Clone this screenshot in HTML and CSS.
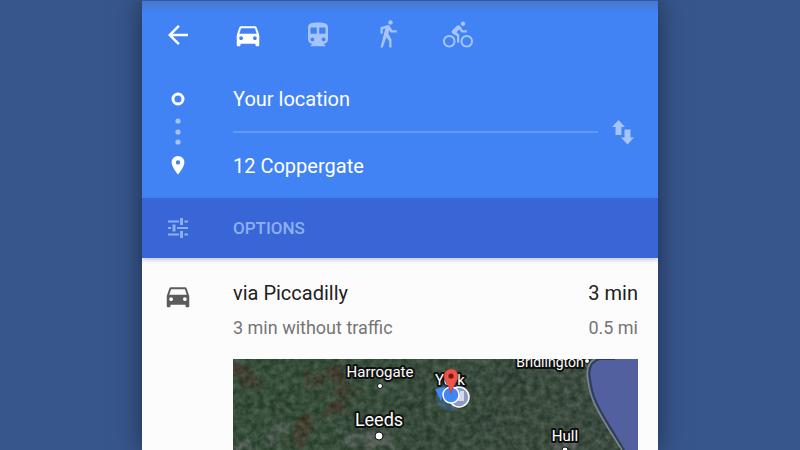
FILE: index.html
```html
<!DOCTYPE html>
<html lang="en">
<head>
<meta charset="utf-8">
<meta name="viewport" content="width=device-width, initial-scale=1">
<title>Directions</title>
<link rel="stylesheet" href="styles.css">
</head>
<body>
<main class="panel">
  <header class="header">
    <nav class="modes" aria-label="Travel mode">
      <button class="icon-button" type="button" aria-label="Back">
        <svg class="icon" viewBox="0 0 24 24"><path d="M20 11H7.830l5.590-5.590L12 4l-8 8 8 8 1.410-1.410L7.830 13H20v-2z"/></svg>
      </button>
      <button class="icon-button" type="button" aria-label="Driving" aria-pressed="true">
        <svg class="icon" viewBox="0 0 24 24"><path d="M18.920 6.010C18.720 5.420 18.160 5 17.500 5h-11c-.66 0-1.210.42-1.420 1.010L3 12v8c0 .55.45 1 1 1h1c.55 0 1-.45 1-1v-1h12v1c0 .55.45 1 1 1h1c.55 0 1-.45 1-1v-8l-2.080-5.990zM6.500 16c-.83 0-1.500-.67-1.500-1.500S5.670 13 6.500 13s1.500.67 1.500 1.500S7.330 16 6.500 16zm11 0c-.83 0-1.500-.67-1.500-1.500s.67-1.500 1.500-1.500 1.500.67 1.500 1.500-.67 1.500-1.500 1.500zM5 11l1.500-4.500h11L19 11H5z"/></svg>
      </button>
      <button class="icon-button muted" type="button" aria-label="Transit">
        <svg class="icon" viewBox="0 0 24 24"><path d="M12 2c-4.420 0-8 .5-8 4v9.500C4 17.430 5.570 19 7.500 19L6 20.500v.5h12v-.5L16.500 19c1.930 0 3.500-1.570 3.500-3.500V6c0-3.500-3.580-4-8-4zM7.500 17c-.83 0-1.500-.67-1.500-1.500S6.670 14 7.500 14s1.500.67 1.500 1.500S8.330 17 7.500 17zm3.500-6H6V6h5v5zm5.500 6c-.83 0-1.500-.67-1.500-1.500s.67-1.500 1.500-1.500 1.500.67 1.500 1.500-.67 1.500-1.500 1.500zm1.500-6h-5V6h5v5z"/></svg>
      </button>
      <button class="icon-button muted" type="button" aria-label="Walking">
        <svg class="icon" viewBox="0 0 24 24"><path d="M14 3.800c.99 0 1.800-.81 1.800-1.800 0-1-.81-1.800-1.800-1.800-1 0-1.800.81-1.800 1.800C12.200 3 13 3.800 14 3.800zm.12 6.200H19V8.200h-3.620l-2-3.330c-.3-.5-.84-.83-1.460-.83-.17 0-.34.03-.49.07L6 5.800V11h1.800V7.330l2.110-.66L6 22h1.800l2.870-8.110L13 17v5h1.800v-6.410l-2.490-4.540.73-2.870L14.120 10z"/></svg>
      </button>
      <button class="icon-button muted" type="button" aria-label="Cycling">
        <svg class="icon" viewBox="0 0 24 24"><path d="M16 4.800c.99 0 1.800-.81 1.800-1.800s-.81-1.800-1.800-1.800c-1 0-1.800.81-1.800 1.800S15 4.800 16 4.800zm3 7.200c-2.760 0-5 2.240-5 5s2.240 5 5 5 5-2.240 5-5-2.240-5-5-5zm0 8.500c-1.930 0-3.500-1.570-3.500-3.500s1.570-3.500 3.500-3.500 3.500 1.570 3.500 3.500-1.570 3.500-3.500 3.500zm-4.200-10.500H19V8.200h-3.200l-1.930-3.270c-.3-.5-.84-.83-1.460-.83-.47 0-.89.19-1.200.5L7.500 8.290C7.190 8.600 7 9.030 7 9.500c0 .63.33 1.160.85 1.470L11.200 13v5H13v-6.480l-2.250-1.670 2.320-2.330L14.800 10zM5 12c-2.760 0-5 2.240-5 5s2.240 5 5 5 5-2.240 5-5-2.240-5-5-5zm0 8.500c-1.930 0-3.500-1.570-3.500-3.500s1.570-3.500 3.500-3.500 3.500 1.570 3.500 3.500-1.570 3.500-3.500 3.500z"/></svg>
      </button>
    </nav>

    <form class="route">
      <svg class="stops" viewBox="0 0 30 98" aria-hidden="true">
        <circle cx="15" cy="16" r="5" fill="none" stroke="#fff" stroke-width="3"/>
        <g fill="#a5c4fa"><circle cx="15" cy="38" r="2.600"/><circle cx="15" cy="49" r="2.600"/><circle cx="15" cy="59" r="2.600"/></g>
        <path fill="#fff" fill-rule="evenodd" d="M15 73a6.400 6.400 0 0 0-6.400 6.400C8.600 84 15 91.500 15 91.500S21.400 84 21.400 79.400A6.400 6.400 0 0 0 15 73zm0 4.200a2.200 2.200 0 1 1 0 4.400 2.200 2.200 0 0 1 0-4.400z"/>
      </svg>
      <div class="fields">
        <input class="field" type="text" aria-label="Starting point" value="Your location">
        <input class="field" type="text" aria-label="Destination" value="12 Coppergate">
      </div>
      <button class="icon-button muted" type="button" aria-label="Swap start and destination">
        <svg class="icon" viewBox="0 0 30 30"><path d="M10.500 3l6.500 7h-3.500v8h-6v-8H4zM16.500 12.500h6v8H26l-6.500 7-6.500-7h3.500z"/></svg>
      </button>
    </form>
  </header>

  <button class="options" type="button">
    <svg class="icon" viewBox="0 0 30 30" aria-hidden="true"><path d="M5 7.500h11v2H5zM17 5h3v7h-3zM21.500 7.500H25v2h-3.500zM5 14h3v2H5zM9.500 11.500h3v7h-3zM14 14h11v2H14zM5 20.500h11v2H5zM17 18h3v7h-3zM21.500 20.500H25v2h-3.500z"/></svg>
    <span>OPTIONS</span>
  </button>

  <article class="result">
    <svg class="icon result-icon" viewBox="0 0 24 24" aria-hidden="true"><path d="M18.920 6.010C18.720 5.420 18.160 5 17.500 5h-11c-.66 0-1.210.42-1.420 1.010L3 12v8c0 .55.45 1 1 1h1c.55 0 1-.45 1-1v-1h12v1c0 .55.45 1 1 1h1c.55 0 1-.45 1-1v-8l-2.080-5.990zM6.500 16c-.83 0-1.500-.67-1.500-1.500S5.670 13 6.500 13s1.500.67 1.500 1.500S7.330 16 6.500 16zm11 0c-.83 0-1.500-.67-1.500-1.500s.67-1.500 1.500-1.500 1.500.67 1.500 1.500-.67 1.500-1.500 1.500zM5 11l1.500-4.500h11L19 11H5z"/></svg>
    <div class="details">
      <div class="line primary"><h1 class="name">via Piccadilly</h1><span>3 min</span></div>
      <div class="line secondary"><span>3 min without traffic</span><span>0.5 mi</span></div>
      <svg class="map" viewBox="0 0 405 91" role="img" aria-label="Satellite map around York">
        <defs>
          <linearGradient id="land"><stop offset="0" stop-color="#36533c"/><stop offset=".45" stop-color="#3a4f3e"/><stop offset="1" stop-color="#414e45"/></linearGradient>
          <filter id="grain" x="0" y="0" width="100%" height="100%" color-interpolation-filters="sRGB">
            <feTurbulence type="fractalNoise" baseFrequency=".16" numOctaves="5" seed="8"/>
            <feColorMatrix values=".8 0 0 0 -.19  .8 0 0 0 -.13  .8 0 0 0 -.19  0 0 0 0 .3"/>
          </filter>
          <filter id="patches" x="-10%" y="-10%" width="120%" height="120%" color-interpolation-filters="sRGB">
            <feTurbulence type="fractalNoise" baseFrequency=".13" numOctaves="4" seed="3" result="n"/>
            <feDisplacementMap in="SourceGraphic" in2="n" scale="24" xChannelSelector="R" yChannelSelector="G"/>
            <feGaussianBlur stdDeviation=".9"/>
          </filter>
        </defs>
        <rect width="405" height="91" fill="url(#land)"/>
        <g filter="url(#patches)">
          <g fill="#4b3a30" opacity=".85">
            <ellipse cx="8" cy="12" rx="8" ry="10"/><ellipse cx="18" cy="23" rx="6" ry="6"/>
            <ellipse cx="80" cy="20" rx="9" ry="7"/><ellipse cx="103" cy="16" rx="9" ry="10"/>
            <ellipse cx="112" cy="31" rx="9" ry="6"/><ellipse cx="104" cy="49" rx="10" ry="7"/>
            <ellipse cx="72" cy="65" rx="8" ry="9"/><ellipse cx="64" cy="79" rx="9" ry="8"/>
          </g>
          <g fill="#77747a" opacity=".6">
            <ellipse cx="48" cy="69" rx="8" ry="4"/><ellipse cx="35" cy="80" rx="9" ry="4"/>
            <ellipse cx="92" cy="59" rx="6" ry="4"/><ellipse cx="118" cy="80" rx="11" ry="6"/>
            <ellipse cx="144" cy="82" rx="15" ry="8"/><ellipse cx="10" cy="89" rx="13" ry="5"/>
            <ellipse cx="331" cy="86" rx="12" ry="5"/><ellipse cx="151" cy="26" rx="8" ry="3"/>
          </g>
          <g fill="#2c3a32" opacity=".5">
            <ellipse cx="180" cy="45" rx="12" ry="5"/><ellipse cx="250" cy="60" rx="14" ry="6"/>
            <ellipse cx="280" cy="22" rx="12" ry="6"/><ellipse cx="200" cy="80" rx="16" ry="5"/>
            <ellipse cx="355" cy="60" rx="9" ry="5"/><ellipse cx="45" cy="45" rx="12" ry="5"/>
          </g>
        </g>
        <rect width="405" height="91" filter="url(#grain)"/>
        <path d="M405 0H360C354 4 353 11 355 20C357 41 367 54 376 69L390 91H405z" fill="#5360a0"/>
        <path d="M382 0H366C357 3 355 10 357 20C359 40 368 53 377 68L391 91" fill="none" stroke="#2f3c58" stroke-width="2"/>
        <path d="M362 0C354 4 353 12 355 22C357 41 366 54 375 69L389 91" fill="none" stroke="#7d8986" stroke-width="1.500"/>
        <g class="place-dots"><circle cx="147" cy="27" r="2.500"/><circle cx="146" cy="77" r="4"/><circle cx="354" cy="2" r="2.500"/><circle cx="332" cy="91" r="3"/></g>
        <g class="places">
          <text class="town" x="147" y="18">Harrogate</text>
          <text class="city" x="146" y="67">Leeds</text>
          <text class="town" x="217" y="26">York</text>
          <text class="small-town" x="317" y="8">Bridlington</text>
          <text class="town" x="332" y="82">Hull</text>
        </g>
        <circle cx="217" cy="38" r="14" fill="#4285f4" opacity=".25"/>
        <path d="M202 30l10-2-4 14z" fill="#4389ef"/>
        <circle cx="226" cy="38" r="10" fill="#8e9bc0" stroke="#fff" stroke-width="1.500"/>
        <path d="M225 36h2v-4h4v10h-6z" fill="#d4d8ea"/>
        <circle cx="218" cy="36" r="8" fill="#4285f4" stroke="#fff" stroke-width="1.500"/>
        <path d="M218 35C217 27 211 23 211 17a7 7 0 0 1 14 0C225 23 219 27 218 35z" fill="#ea5548" stroke="#b8392f" stroke-width=".6"/>
        <circle cx="218" cy="17" r="2.600" fill="#7a1510"/>
      </svg>
    </div>
  </article>
</main>
</body>
</html>
```
FILE: styles.css
```css
* {
  box-sizing: border-box;
}

body {
  margin: 0;
  background: #37568b;
  font-family: Roboto, "Liberation Sans", sans-serif;
  font-size: 20px;
  line-height: 24px;
}

button,
input {
  margin: 0;
  padding: 0;
  border: 0;
  background: none;
  color: inherit;
  font: inherit;
}

.panel {
  max-width: 516px;
  min-height: 100vh;
  margin: 0 auto;
  background: #fdfcfd;
  box-shadow: 0 0 24px rgba(20, 30, 50, 0.7);
}

.header {
  padding: 19px 20px 17px 21px;
  border-top: 1px solid #2c5aa8;
  background: linear-gradient(#4878cb, #4183f5 12px);
  color: #fff;
}

.modes {
  display: flex;
  gap: 40px;
}

.icon-button {
  flex: none;
  height: 30px;
}

.icon {
  display: block;
  flex: none;
  width: 30px;
  height: 30px;
  fill: currentColor;
}

.muted {
  color: #a5c4fa;
}

.route {
  display: flex;
  align-items: center;
  margin-top: 33px;
}

.stops {
  flex: none;
  width: 30px;
  height: 98px;
  margin-right: 40px;
}

.fields {
  flex: 1;
  min-width: 0;
  margin-right: 10px;
}

.field {
  display: block;
  width: 100%;
  height: 48px;
  padding-bottom: 16px;
}

.field + .field {
  height: 50px;
  padding: 18px 0 0;
  border-top: 2px solid #6099f8;
}

.options {
  display: flex;
  align-items: center;
  gap: 40px;
  width: 100%;
  height: 60px;
  padding: 0 21px;
  background: #3866d6;
  box-shadow: 0 2px 4px rgba(30, 50, 100, 0.25);
  color: #8db0f4;
  font-size: 17px;
  font-weight: 500;
}

.result {
  display: flex;
  gap: 40px;
  padding: 23px 20px 0 21px;
}

.result-icon {
  color: #5c5c5c;
}

.details {
  flex: 1;
  min-width: 0;
}

.line {
  display: flex;
  justify-content: space-between;
}

.name {
  margin: 0;
  font: inherit;
}

.primary {
  color: #212121;
}

.secondary {
  margin: 11px 0 19px;
  color: #757575;
  font-size: 18px;
}

.map {
  display: block;
  width: 100%;
}

.place-dots {
  fill: #fff;
  stroke: #111;
  stroke-width: 1px;
}

.places {
  fill: #fff;
  stroke: #111;
  stroke-width: 4px;
  stroke-linejoin: round;
  paint-order: stroke;
  text-anchor: middle;
}

.city {
  font-size: 18px;
}

.town {
  font-size: 15px;
}

.small-town {
  font-size: 14px;
}
```
